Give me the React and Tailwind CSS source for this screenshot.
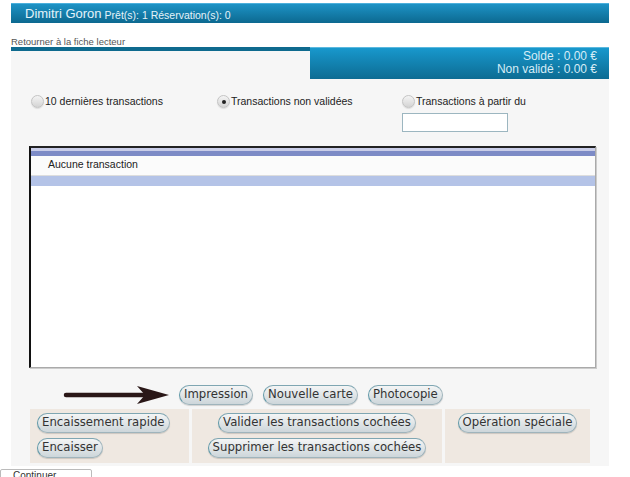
const btn =
  "inline-flex items-center h-[20px] px-[4px] rounded-full border border-[#9fb4bc] border-l-[#5f98a8] border-t-[#7fa6b2] bg-gradient-to-b from-[#f4f5f5] to-[#cdd6da] font-['DejaVu_Sans',sans-serif] text-[11.7px] text-[#333] leading-none shadow-[0_1px_1px_rgba(0,0,0,0.15)] whitespace-nowrap";

function Radio({ checked, label }) {
  return (
    <label className="flex items-center">
      <span className="w-[13px] h-[13px] rounded-full border border-[#c4c4c4] bg-gradient-to-b from-[#f4f4f4] to-[#d4d4d4] flex items-center justify-center shadow-[0_1px_1px_rgba(0,0,0,0.1)]">
        {checked && <span className="w-[4px] h-[4px] rounded-full bg-[#222]" />}
      </span>
      <span className="ml-[1px] text-[10.5px] text-[#222]">{label}</span>
    </label>
  );
}

export default function App() {
  return (
    <div className="w-[630px] h-[477px] overflow-hidden bg-white font-['Liberation_Sans',Arial,sans-serif]">
      <div className="ml-[11px] w-[598px] pt-[3px]">
        <div className="h-[20px] bg-gradient-to-b from-[#1d93c6] to-[#0c6990] border-t border-[#4cb0dc] flex items-end pb-[3px] pl-[14px] text-[#e4f3fa]">
          <span className="text-[13px] leading-none">Dimitri Goron</span>
          <span className="text-[10.5px] leading-none ml-[3px]">Prêt(s): 1 Réservation(s): 0</span>
        </div>

        <div className="h-[24px] flex items-end text-[9.5px] text-[#555] leading-none pb-[1px]">
          Retourner à la fiche lecteur
        </div>

        <div className="bg-[#f6f6f6] pb-[3px]">
          <div className="flex">
            <div className="flex-1 h-[4px] bg-[#0e6a8e]" />
            <div className="w-[299px] h-[32px] bg-gradient-to-b from-[#1898cd] to-[#0d6c93] border-t border-[#5bb8de] text-right pr-[12px] pt-[2px] text-[12px] leading-[13px] text-[#d6edf7]">
              <div>Solde : 0.00 €</div>
              <div>Non validé : 0.00 €</div>
            </div>
          </div>

          <div className="grid grid-cols-[186px_185px_1fr] items-start pl-[20px] pt-[15px]">
            <Radio label="10 dernières transactions" />
            <Radio checked label="Transactions non validées" />
            <div className="flex flex-col">
              <Radio label="Transactions à partir du" />
              <input className="mt-[3px] w-[106px] h-[19px] bg-white border border-[#9cb6c0] outline-none" />
            </div>
          </div>

          <div className="ml-[18px] mr-[13px] mt-[14px] h-[222px] bg-white border-t-2 border-l-2 border-t-[#222] border-l-[#111] border-r border-b border-r-[#aaa] border-b-[#aaa] shadow-[1px_1px_0_#ccc]">
            <div className="h-[3px] bg-[#c9cde8]" />
            <div className="h-[5px] bg-[#7d8bc6]" />
            <div className="h-[20px] flex items-center pl-[17px] text-[10.5px] text-[#222] border-b border-[#ddd] bg-[#fbfbfb]">
              Aucune transaction
            </div>
            <div className="h-[10px] bg-[#b4c3e7]" />
          </div>

          <div className="flex items-center h-[20px] mt-[17px]">
            <svg width="108" height="20" viewBox="0 0 108 20" className="ml-[52px] mr-[8px]">
              <line x1="3" y1="10" x2="90" y2="10" stroke="#2a1717" strokeWidth="4.5" strokeLinecap="round" />
              <path d="M74 1 L106 10 L74 19 L82 10 Z" fill="#2a1717" />
            </svg>
            <div className="flex gap-[10px]">
              <span className={btn}>Impression</span>
              <span className={btn}>Nouvelle carte</span>
              <span className={btn}>Photocopie</span>
            </div>
          </div>

          <div className="ml-[19px] mr-[19px] mt-[4px] h-[54px] grid grid-cols-[159px_250px_1fr] gap-[3px]">
            <div className="bg-[#efe8e1] flex flex-col gap-[5px] pt-[4px] pl-[7px] items-start">
              <span className={btn}>Encaissement rapide</span>
              <span className={btn}>Encaisser</span>
            </div>
            <div className="bg-[#efe8e1] flex flex-col gap-[5px] pt-[4px] items-center">
              <span className={btn}>Valider les transactions cochées</span>
              <span className={btn}>Supprimer les transactions cochées</span>
            </div>
            <div className="bg-[#efe8e1] flex flex-col pt-[4px] items-center">
              <span className={btn}>Opération spéciale</span>
            </div>
          </div>
        </div>
      </div>
      <div className="mt-[3px] w-[92px] h-[20px] border border-[#bbb] rounded-[2px] bg-white text-[10px] text-[#333] pl-[12px] pt-[1px] leading-none">
        Continuer
      </div>
    </div>
  );
}
